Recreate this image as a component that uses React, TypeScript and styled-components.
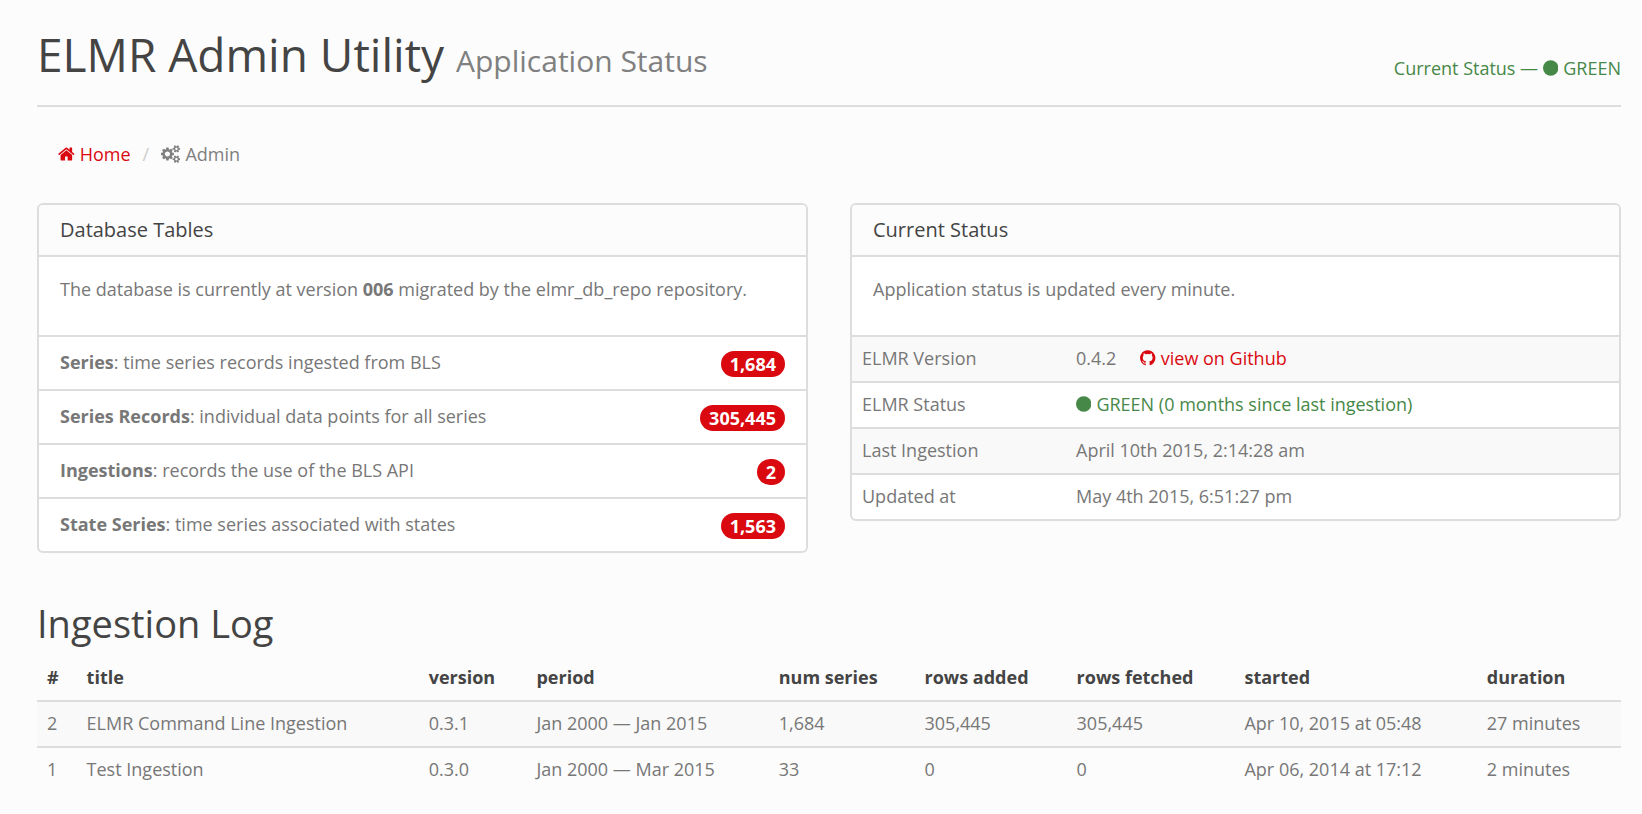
import React from 'react';
import styled, { createGlobalStyle } from 'styled-components';

const line = '#dddddd';
const ink = '#444444';
const text = '#777777';
const red = '#d9090f';
const green = '#468847';

const GlobalStyle = createGlobalStyle`
  *, *::before, *::after { box-sizing: border-box; }
  body {
    margin: 0;
    background: #fcfcfc;
    color: ${text};
    font-family: "Open Sans", "Noto Sans", sans-serif;
    font-size: 18px;
    line-height: 26px;
  }
`;

const Page = styled.div`
  padding: 27px 21px 24px 37px;
`;

const PageHeader = styled.header`
  display: flex;
  justify-content: space-between;
  align-items: flex-end;
  padding-bottom: 24px;
  border-bottom: 2px solid ${line};
`;

const Title = styled.h1`
  margin: 0;
  color: ${ink};
  font-size: 46px;
  font-weight: 400;
  line-height: 54px;
`;

const Subtitle = styled.small`
  color: #808080;
  font-size: 30px;
  line-height: 30px;
`;

const Status = styled.span`
  color: ${green};
  white-space: nowrap;
`;

const Crumbs = styled.ol`
  display: flex;
  list-style: none;
  margin: 34px 0 36px;
  padding: 0 21px;
  color: #808080;

  li + li::before {
    content: "/";
    padding: 0 12px;
    color: #cccccc;
  }
`;

const Link = styled.a`
  color: ${red};
  text-decoration: none;
`;

const Icon = styled.svg`
  height: 18px;
  fill: currentColor;
  vertical-align: -2px;
  margin-right: 5px;
`;

const Columns = styled.div`
  display: grid;
  grid-template-columns: 1fr 1fr;
  align-items: start;
  gap: 42px;
`;

const Panel = styled.section`
  background: #ffffff;
  border: 2px solid ${line};
  border-radius: 6px;
  overflow: hidden;
`;

const PanelHeading = styled.h3`
  margin: 0;
  padding: 12px 21px;
  background: #fcfcfc;
  border-bottom: 2px solid ${line};
  color: ${ink};
  font-size: 20px;
  font-weight: 400;
  line-height: 26px;
`;

const PanelBody = styled.p`
  margin: 0;
  padding: 19px 21px 33px;
`;

const List = styled.ul`
  list-style: none;
  margin: 0;
  padding: 0;
`;

const ListItem = styled.li`
  display: flex;
  justify-content: space-between;
  align-items: flex-start;
  padding: 12px 21px;
  border-top: 2px solid ${line};
`;

const Badge = styled.span`
  margin-top: 2px;
  padding: 0 9px;
  border-radius: 14px;
  background: ${red};
  color: #ffffff;
  font-weight: 700;
`;

const Table = styled.table`
  width: 100%;
  border-collapse: separate;
  border-spacing: 0;
  text-align: left;

  th, td { padding: 8px 8px 10px 10px; font-weight: 400; }
  tbody th, tbody td { border-top: 2px solid ${line}; }
  tbody tr:nth-child(odd) { background: #f9f9f9; }
  thead th { color: ${ink}; font-weight: 700; }
`;

const StatusTable = styled(Table)`
  th { width: 214px; }
`;

const Column = styled.col<{ $share: number }>`
  width: ${(p) => p.$share}%;
`;

const Version = styled.span`
  margin-right: 24px;
`;

const SectionTitle = styled.h2`
  margin: 42px 0 5px;
  color: ${ink};
  font-size: 38px;
  font-weight: 400;
  line-height: 56px;
`;

const HomeIcon = () => (
  <Icon viewBox="64 0 1664 1792" aria-hidden="true">
    <path d="M1472 992v480q0 26-19 45t-45 19h-384v-384h-256v384h-384q-26 0-45-19t-19-45v-480q0-1 .5-3t.5-3l575-474 575 474q1 2 1 6zm223-69l-62 74q-8 9-21 11h-3q-13 0-21-7l-692-577-692 577q-12 8-24 7-13-2-21-11l-62-74q-8-10-7-23.500t11-21.500l719-599q32-26 76-26t76 26l244 204v-195q0-14 9-23t23-9h192q14 0 23 9t9 23v408l219 182q10 8 11 21.500t-7 23.500z" />
  </Icon>
);

const smallGear =
  'v140q0 16-149 31-12 27-30 52 51 113 51 138 0 4-4 7-122 71-124 71-8 0-46-47t-52-68q-20 2-30 2t-30-2q-14 21-52 68t-46 47q-2 0-124-71-4-3-4-7 0-25 51-138-18-25-30-52-149-15-149-31v-140q0-16 149-31 13-29 30-52-51-113-51-138 0-4 4-7 4-2 35-20t59-34 30-16q8 0 46 46.5t52 67.5q20-2 30-2t30 2q51-71 92-112l6-2q4 0 124 70 4 3 4 7 0 25-51 138 17 23 30 52 149 15 149 31z';

const CogsIcon = () => (
  <Icon viewBox="0 0 1920 1792" aria-hidden="true">
    <path
      d={
        'M896 896q0-106-75-181t-181-75-181 75-75 181 75 181 181 75 181-75 75-181zm768 512q0-52-38-90t-90-38-90 38-38 90q0 53 37.5 90.5t90.5 37.5 90.5-37.5 37.5-90.5zm0-1024q0-52-38-90t-90-38-90 38-38 90q0 53 37.5 90.5t90.5 37.5 90.5-37.5 37.5-90.5zm-384 421v185q0 10-7 19.5t-16 10.5l-155 24q-11 35-32 76 34 48 90 115 7 11 7 20 0 12-7 19-23 30-82.5 89.5t-78.5 59.5q-11 0-21-7l-115-90q-37 19-77 31-11 108-23 155-7 24-30 24h-186q-11 0-20-7.5t-10-17.5l-23-153q-34-10-75-31l-118 89q-7 7-20 7-11 0-21-8-144-133-144-160 0-9 7-19 10-14 41-53t47-61q-23-44-35-82l-152-24q-10-1-17-9.500t-7-19.500v-185q0-10 7-19.500t16-10.500l155-24q11-35 32-76-34-48-90-115-7-11-7-20 0-12 7-20 22-30 82-89t79-59q11 0 21 7l115 90q34-18 77-32 11-108 23-154 7-24 30-24h186q11 0 20 7.500t10 17.500l23 153q34 10 75 31l118-89q8-7 20-7 11 0 21 8 144 133 144 160 0 8-7 19-12 16-42 54t-45 60q23 48 34 82l152 23q10 2 17 10.500t7 19.500z' +
        'M1920 1338' + smallGear +
        'M1920 314' + smallGear
      }
    />
  </Icon>
);

const GithubIcon = () => (
  <Icon viewBox="128 0 1536 1792" aria-hidden="true">
    <path d="M896 128q209 0 385.500 103t279.500 279.500 103 385.500q0 251-146.500 451.500t-378.500 277.500q-27 5-40-7t-13-30q0-3 .5-76.500t.5-134.500q0-97-52-142 57-6 102.500-18t94-39 81-66.500 53-105 20.500-150.500q0-119-79-206 37-91-8-204-28-9-81 11t-92 44l-38 24q-93-26-192-26t-192 26q-16-11-42.500-27t-83.500-38.500-85-13.500q-45 113-8 204-79 87-79 206 0 85 20.500 150t52.500 105 80.500 67 94 39 102.500 18q-39 36-49 103-21 10-45 15t-57 5-65.500-21.500-55.500-62.500q-19-32-48.500-52t-49.500-24l-20-3q-21 0-29 4.500t-5 11.500 9 14 13 12l7 5q22 10 43.500 38t31.500 51l10 23q13 38 44 61.500t67 30 69.500 7 55.500-3.500l23-4q0 38 .5 88.500t.5 54.500q0 18-13 30t-40 7q-232-77-378.500-277.500t-146.500-451.500q0-209 103-385.500t279.500-279.500 385.500-103z" />
  </Icon>
);

const DotIcon = () => (
  <Icon viewBox="128 0 1536 1792" aria-hidden="true">
    <circle cx="896" cy="896" r="768" />
  </Icon>
);

const tables = [
  { name: 'Series', about: 'time series records ingested from BLS', count: '1,684' },
  { name: 'Series Records', about: 'individual data points for all series', count: '305,445' },
  { name: 'Ingestions', about: 'records the use of the BLS API', count: '2' },
  { name: 'State Series', about: 'time series associated with states', count: '1,563' },
];

const logColumns = [
  { label: '#', share: 2.5 },
  { label: 'title', share: 21.6 },
  { label: 'version', share: 6.8 },
  { label: 'period', share: 15.3 },
  { label: 'num series', share: 9.2 },
  { label: 'rows added', share: 9.6 },
  { label: 'rows fetched', share: 10.6 },
  { label: 'started', share: 15.3 },
  { label: 'duration', share: 9.1 },
];

const log = [
  ['2', 'ELMR Command Line Ingestion', '0.3.1', 'Jan 2000 — Jan 2015', '1,684', '305,445', '305,445', 'Apr 10, 2015 at 05:48', '27 minutes'],
  ['1', 'Test Ingestion', '0.3.0', 'Jan 2000 — Mar 2015', '33', '0', '0', 'Apr 06, 2014 at 17:12', '2 minutes'],
];

export default function App() {
  return (
    <Page>
      <GlobalStyle />
      <PageHeader>
        <Title>
          ELMR Admin Utility <Subtitle>Application Status</Subtitle>
        </Title>
        <Status>Current Status — <DotIcon />GREEN</Status>
      </PageHeader>

      <nav aria-label="Breadcrumb">
        <Crumbs>
          <li><Link href="#home"><HomeIcon />Home</Link></li>
          <li aria-current="page"><CogsIcon />Admin</li>
        </Crumbs>
      </nav>

      <main>
        <Columns>
          <Panel>
            <PanelHeading>Database Tables</PanelHeading>
            <PanelBody>
              The database is currently at version <strong>006</strong> migrated by the elmr_db_repo repository.
            </PanelBody>
            <List>
              {tables.map((t) => (
                <ListItem key={t.name}>
                  <span><strong>{t.name}</strong>: {t.about}</span>
                  <Badge>{t.count}</Badge>
                </ListItem>
              ))}
            </List>
          </Panel>

          <Panel>
            <PanelHeading>Current Status</PanelHeading>
            <PanelBody>Application status is updated every minute.</PanelBody>
            <StatusTable>
              <tbody>
                <tr>
                  <th scope="row">ELMR Version</th>
                  <td>
                    <Version>0.4.2</Version>
                    <Link href="#github"><GithubIcon />view on Github</Link>
                  </td>
                </tr>
                <tr>
                  <th scope="row">ELMR Status</th>
                  <td><Status><DotIcon />GREEN (0 months since last ingestion)</Status></td>
                </tr>
                <tr>
                  <th scope="row">Last Ingestion</th>
                  <td>April 10th 2015, 2:14:28 am</td>
                </tr>
                <tr>
                  <th scope="row">Updated at</th>
                  <td>May 4th 2015, 6:51:27 pm</td>
                </tr>
              </tbody>
            </StatusTable>
          </Panel>
        </Columns>

        <SectionTitle>Ingestion Log</SectionTitle>
        <Table>
          <colgroup>
            {logColumns.map((c) => <Column key={c.label} $share={c.share} />)}
          </colgroup>
          <thead>
            <tr>
              {logColumns.map((c) => <th key={c.label} scope="col">{c.label}</th>)}
            </tr>
          </thead>
          <tbody>
            {log.map((row) => (
              <tr key={row[0]}>
                {row.map((cell, i) => <td key={i}>{cell}</td>)}
              </tr>
            ))}
          </tbody>
        </Table>
      </main>
    </Page>
  );
}
